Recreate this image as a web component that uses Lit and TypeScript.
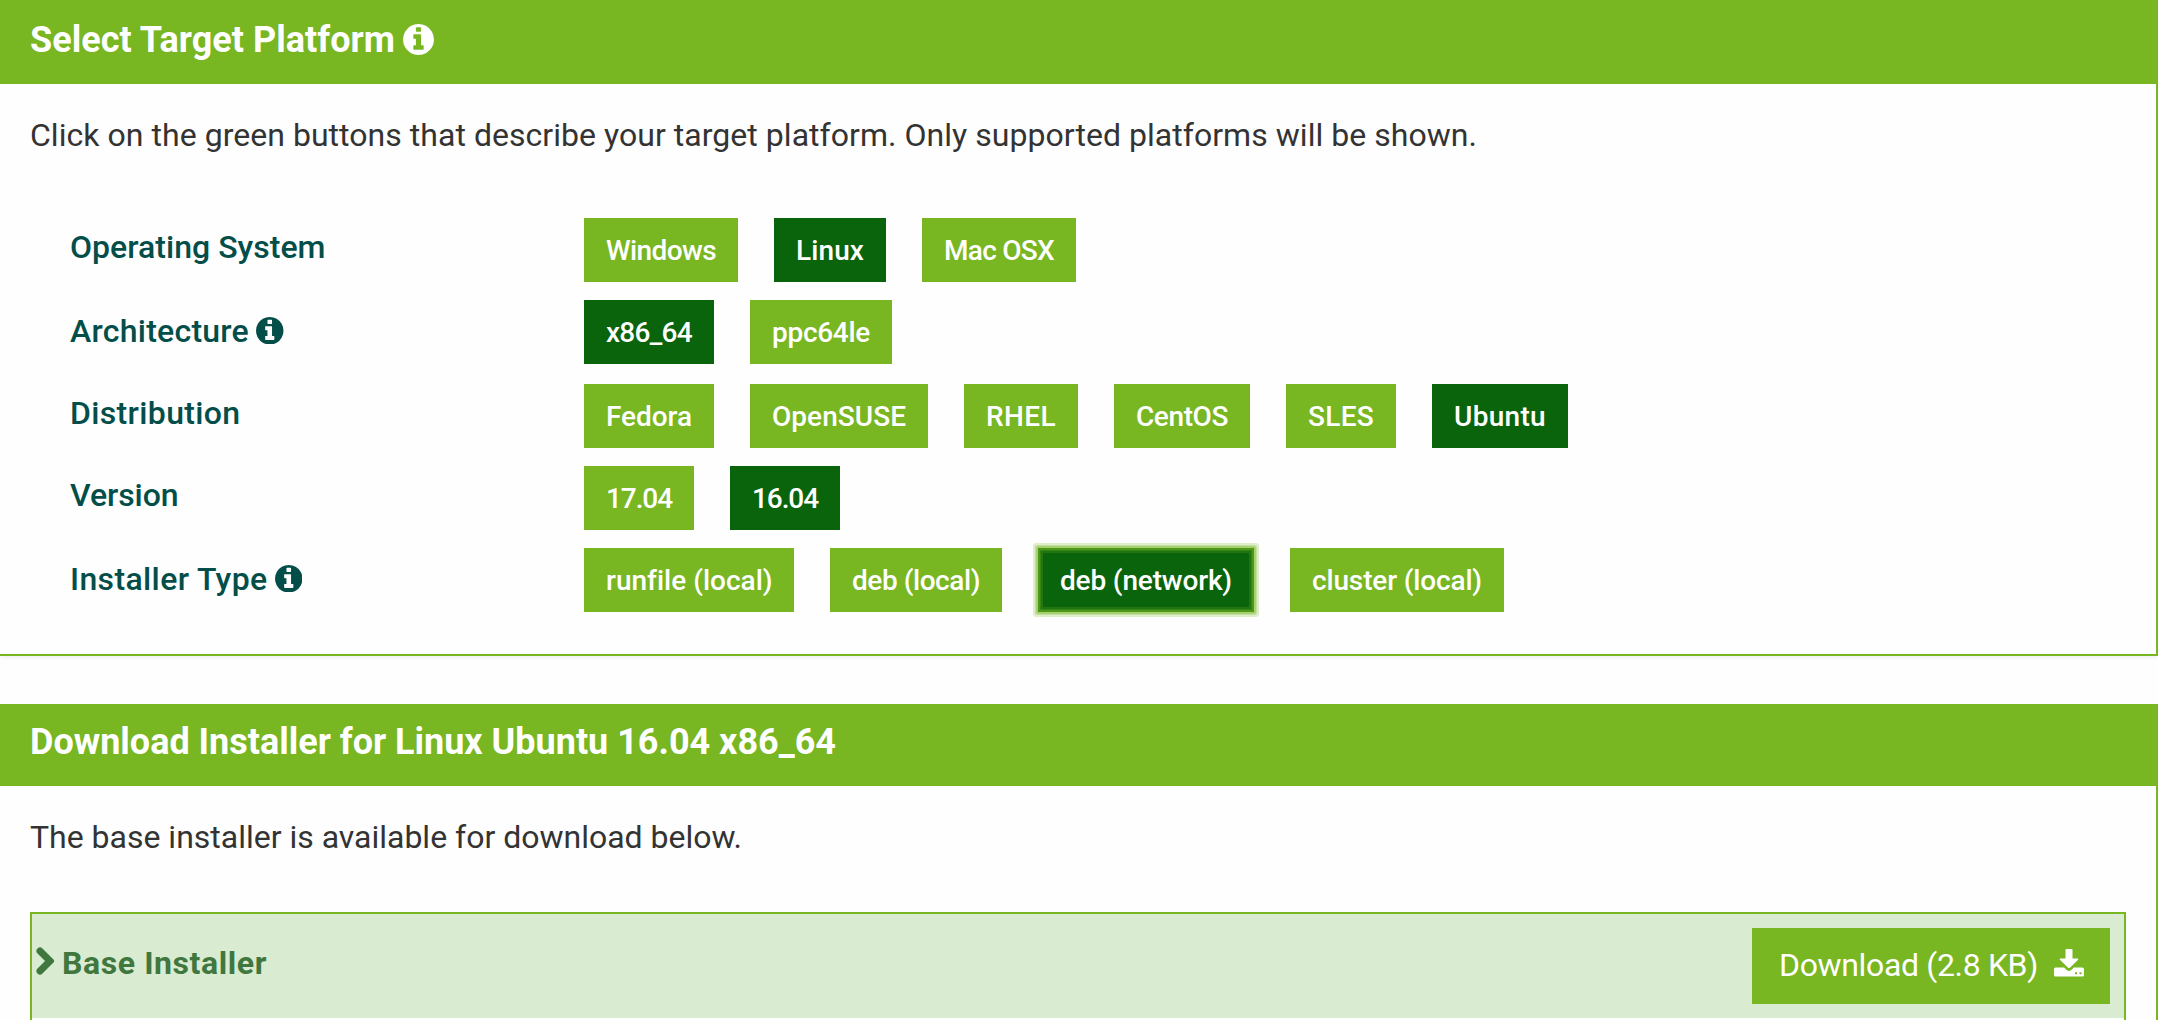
import { LitElement, html, css, nothing } from "lit";
import { customElement, property } from "lit/decorators.js";
import { classMap } from "lit/directives/class-map.js";
import { styleMap } from "lit/directives/style-map.js";

/** Text tracked evenly so that it fills a given advance width. */
@customElement("fit-text")
class FitText extends LitElement {
  @property() text = "";
  @property({ type: Number }) width = 0;

  static styles = css`
    :host { display: inline-block; white-space: nowrap; }
    .box { display: block; overflow: visible; }
  `;

  firstUpdated() {
    const run = this.renderRoot.querySelector<HTMLElement>(".run")!;
    const natural = run.getBoundingClientRect().width;
    run.style.letterSpacing = `${(this.width - natural) / this.text.length}px`;
  }

  render() {
    return html`<span class="box" style=${styleMap({ width: `${this.width}px` })}><span class="run">${this.text}</span></span>`;
  }
}

const infoIcon = html`<svg class="info" viewBox="128 128 1536 1536" aria-hidden="true">
  <path fill="currentColor" d="M1152 1376v-160q0-14-9-23t-23-9h-96v-512q0-14-9-23t-23-9h-320q-14 0-23 9t-9 23v160q0 14 9 23t23 9h96v320h-96q-14 0-23 9t-9 23v160q0 14 9 23t23 9h448q14 0 23-9t9-23zm-128-896v-160q0-14-9-23t-23-9h-192q-14 0-23 9t-9 23v160q0 14 9 23t23 9h192q14 0 23-9t9-23zm640 416q0 209-103 385.5t-279.5 279.5-385.5 103-385.5-103-279.5-279.5-103-385.5 103-385.5 279.5-279.5 385.5-103 385.5 103 279.5 279.5 103 385.5z"/>
</svg>`;

interface Option { text: string; width: number; on?: boolean; focus?: boolean }
interface Row { label: string; width: number; info?: boolean; options: Option[] }

const rows: Row[] = [
  { label: "Operating System", width: 255.5, options: [
    { text: "Windows", width: 154 },
    { text: "Linux", width: 112, on: true },
    { text: "Mac OSX", width: 154 } ] },
  { label: "Architecture", width: 179, info: true, options: [
    { text: "x86_64", width: 130, on: true },
    { text: "ppc64le", width: 142 } ] },
  { label: "Distribution", width: 170.5, options: [
    { text: "Fedora", width: 130 },
    { text: "OpenSUSE", width: 178 },
    { text: "RHEL", width: 114 },
    { text: "CentOS", width: 136 },
    { text: "SLES", width: 110 },
    { text: "Ubuntu", width: 136, on: true } ] },
  { label: "Version", width: 108.5, options: [
    { text: "17.04", width: 110 },
    { text: "16.04", width: 110, on: true } ] },
  { label: "Installer Type", width: 197.5, info: true, options: [
    { text: "runfile (local)", width: 210 },
    { text: "deb (local)", width: 172 },
    { text: "deb (network)", width: 216, on: true, focus: true },
    { text: "cluster (local)", width: 214 } ] },
];

@customElement("app-root")
class AppRoot extends LitElement {
  static styles = css`
    :host {
      display: block;
      height: 1020px;
      overflow: hidden;
      background: #fefefe;
      color: #333;
      font-family: Roboto, "Liberation Sans", sans-serif;
      font-size: 32px;
    }
    * { box-sizing: border-box; }
    .panel {
      border-right: 2px solid #78b622;
      border-bottom: 2px solid #78b622;
      box-shadow: 0 2px 4px rgba(0, 0, 0, 0.06);
      margin-bottom: 48px;
    }
    .panel.first .head { height: 84px; padding-top: 2px; }
    .head {
      display: flex;
      height: 82px;
      margin-right: -2px;
      padding-left: 30px;
      background: #78b622;
      color: #fff;
      font-size: 36px;
      font-weight: 700;
      line-height: 76px;
    }
    .head .info { width: 31px; height: 31px; margin: 21.5px 0 0 8px; }
    .intro { margin: 0; padding-left: 30px; height: 102px; line-height: 102px; }
    .rows { padding: 32px 0 42px 70px; display: flex; flex-direction: column; gap: 18px; }
    .row { display: flex; height: 64px; }
    .row:nth-child(3) { margin-top: 2px; }
    .label {
      display: flex;
      width: 514px;
      line-height: 58px;
      color: #044e4a;
      font-weight: 500;
    }
    .label.with-info { padding-top: 2px; }
    .label .info { width: 27.5px; height: 27.5px; margin: 14.5px 0 0 7px; }
    .options { display: flex; gap: 36px; }
    .option {
      display: flex;
      align-items: flex-start;
      height: 64px;
      margin: 0;
      padding: 0 22px;
      border: 0;
      background: #78b622;
      color: #fff;
      font: 500 28px/65px Roboto, "Liberation Sans", sans-serif;
    }
    .option.on { background: #09640c; }
    .option.focus {
      border-radius: 1px;
      box-shadow:
        0 0 0 2px #a9d070, 0 0 0 3px #c4df9f, 0 0 0 5px #deedca,
        inset 0 0 0 2px #4b981a, inset 0 0 0 3px #348513, inset 0 0 0 5px #22750f;
    }
    .installer {
      display: flex;
      align-items: flex-start;
      height: 240px;
      margin: 24px 30px 0;
      border: 2px solid #78b622;
    }
    .strip {
      display: flex;
      flex: 1;
      height: 104px;
      padding: 0 14px 0 4px;
      background: #d9ebd0;
    }
    .chevron { width: 18px; height: 28px; margin: 33px 8px 0 0; }
    .name { color: #3f773f; font-weight: 700; line-height: 98px; }
    .download {
      display: flex;
      height: 76px;
      width: 358px;
      margin: 14px 0 0 auto;
      padding: 0 0 0 27px;
      background: #78b622;
      color: #fff;
      line-height: 74px;
    }
    .tray { width: 30px; height: 28px; margin: 20.5px 0 0 16px; }
  `;

  private row(r: Row) {
    return html`<div class="row">
      <div class=${classMap({ label: true, "with-info": !!r.info })}>
        <fit-text .text=${r.label} .width=${r.width}></fit-text>${r.info ? infoIcon : nothing}
      </div>
      <div class="options">
        ${r.options.map((o) => html`<button class=${classMap({ option: true, on: !!o.on, focus: !!o.focus })}><fit-text .text=${o.text} .width=${o.width - 44}></fit-text></button>`)}
      </div>
    </div>`;
  }

  render() {
    return html`
      <section class="panel first">
        <div class="head"><fit-text .text=${"Select Target Platform"} .width=${365}></fit-text>${infoIcon}</div>
        <p class="intro"><fit-text .text=${"Click on the green buttons that describe your target platform. Only supported platforms will be shown."} .width=${1447}></fit-text></p>
        <div class="rows">${rows.map((r) => this.row(r))}</div>
      </section>
      <section class="panel">
        <div class="head"><fit-text .text=${"Download Installer for Linux Ubuntu 16.04 x86_64"} .width=${806}></fit-text></div>
        <p class="intro"><fit-text .text=${"The base installer is available for download below."} .width=${712}></fit-text></p>
        <div class="installer">
          <div class="strip">
            <svg class="chevron" viewBox="0 0 18 28" aria-hidden="true">
              <path d="M4 4L14 14L4 24" fill="none" stroke="#3f773f" stroke-width="7" stroke-linecap="round"/>
            </svg>
            <fit-text class="name" .text=${"Base Installer"} .width=${205}></fit-text>
            <div class="download">
              <fit-text .text=${"Download (2.8 KB)"} .width=${259}></fit-text>
              <svg class="tray" viewBox="0 0 30 28" aria-hidden="true">
                <path fill="#fff" d="M12.500 0h5q1 0 1 1v8.500h5q1.500 0 .6 1.200l-8.200 8q-.9.800-1.800 0l-8.200-8q-.9-1.200.6-1.200h5v-8.500q0-1 1-1z"/>
                <path fill="#fff" fill-rule="evenodd" d="M1.500 18.500h8.500l3 2.700q2 1.500 4 0l3-2.700h8.500q1.500 0 1.500 1.500v6q0 1.500-1.500 1.500h-27q-1.500 0-1.500-1.500v-6q0-1.500 1.500-1.500zM21 23.300h2v2h-2zM25.500 23.300h2v2h-2z"/>
              </svg>
            </div>
          </div>
        </div>
      </section>`;
  }
}
